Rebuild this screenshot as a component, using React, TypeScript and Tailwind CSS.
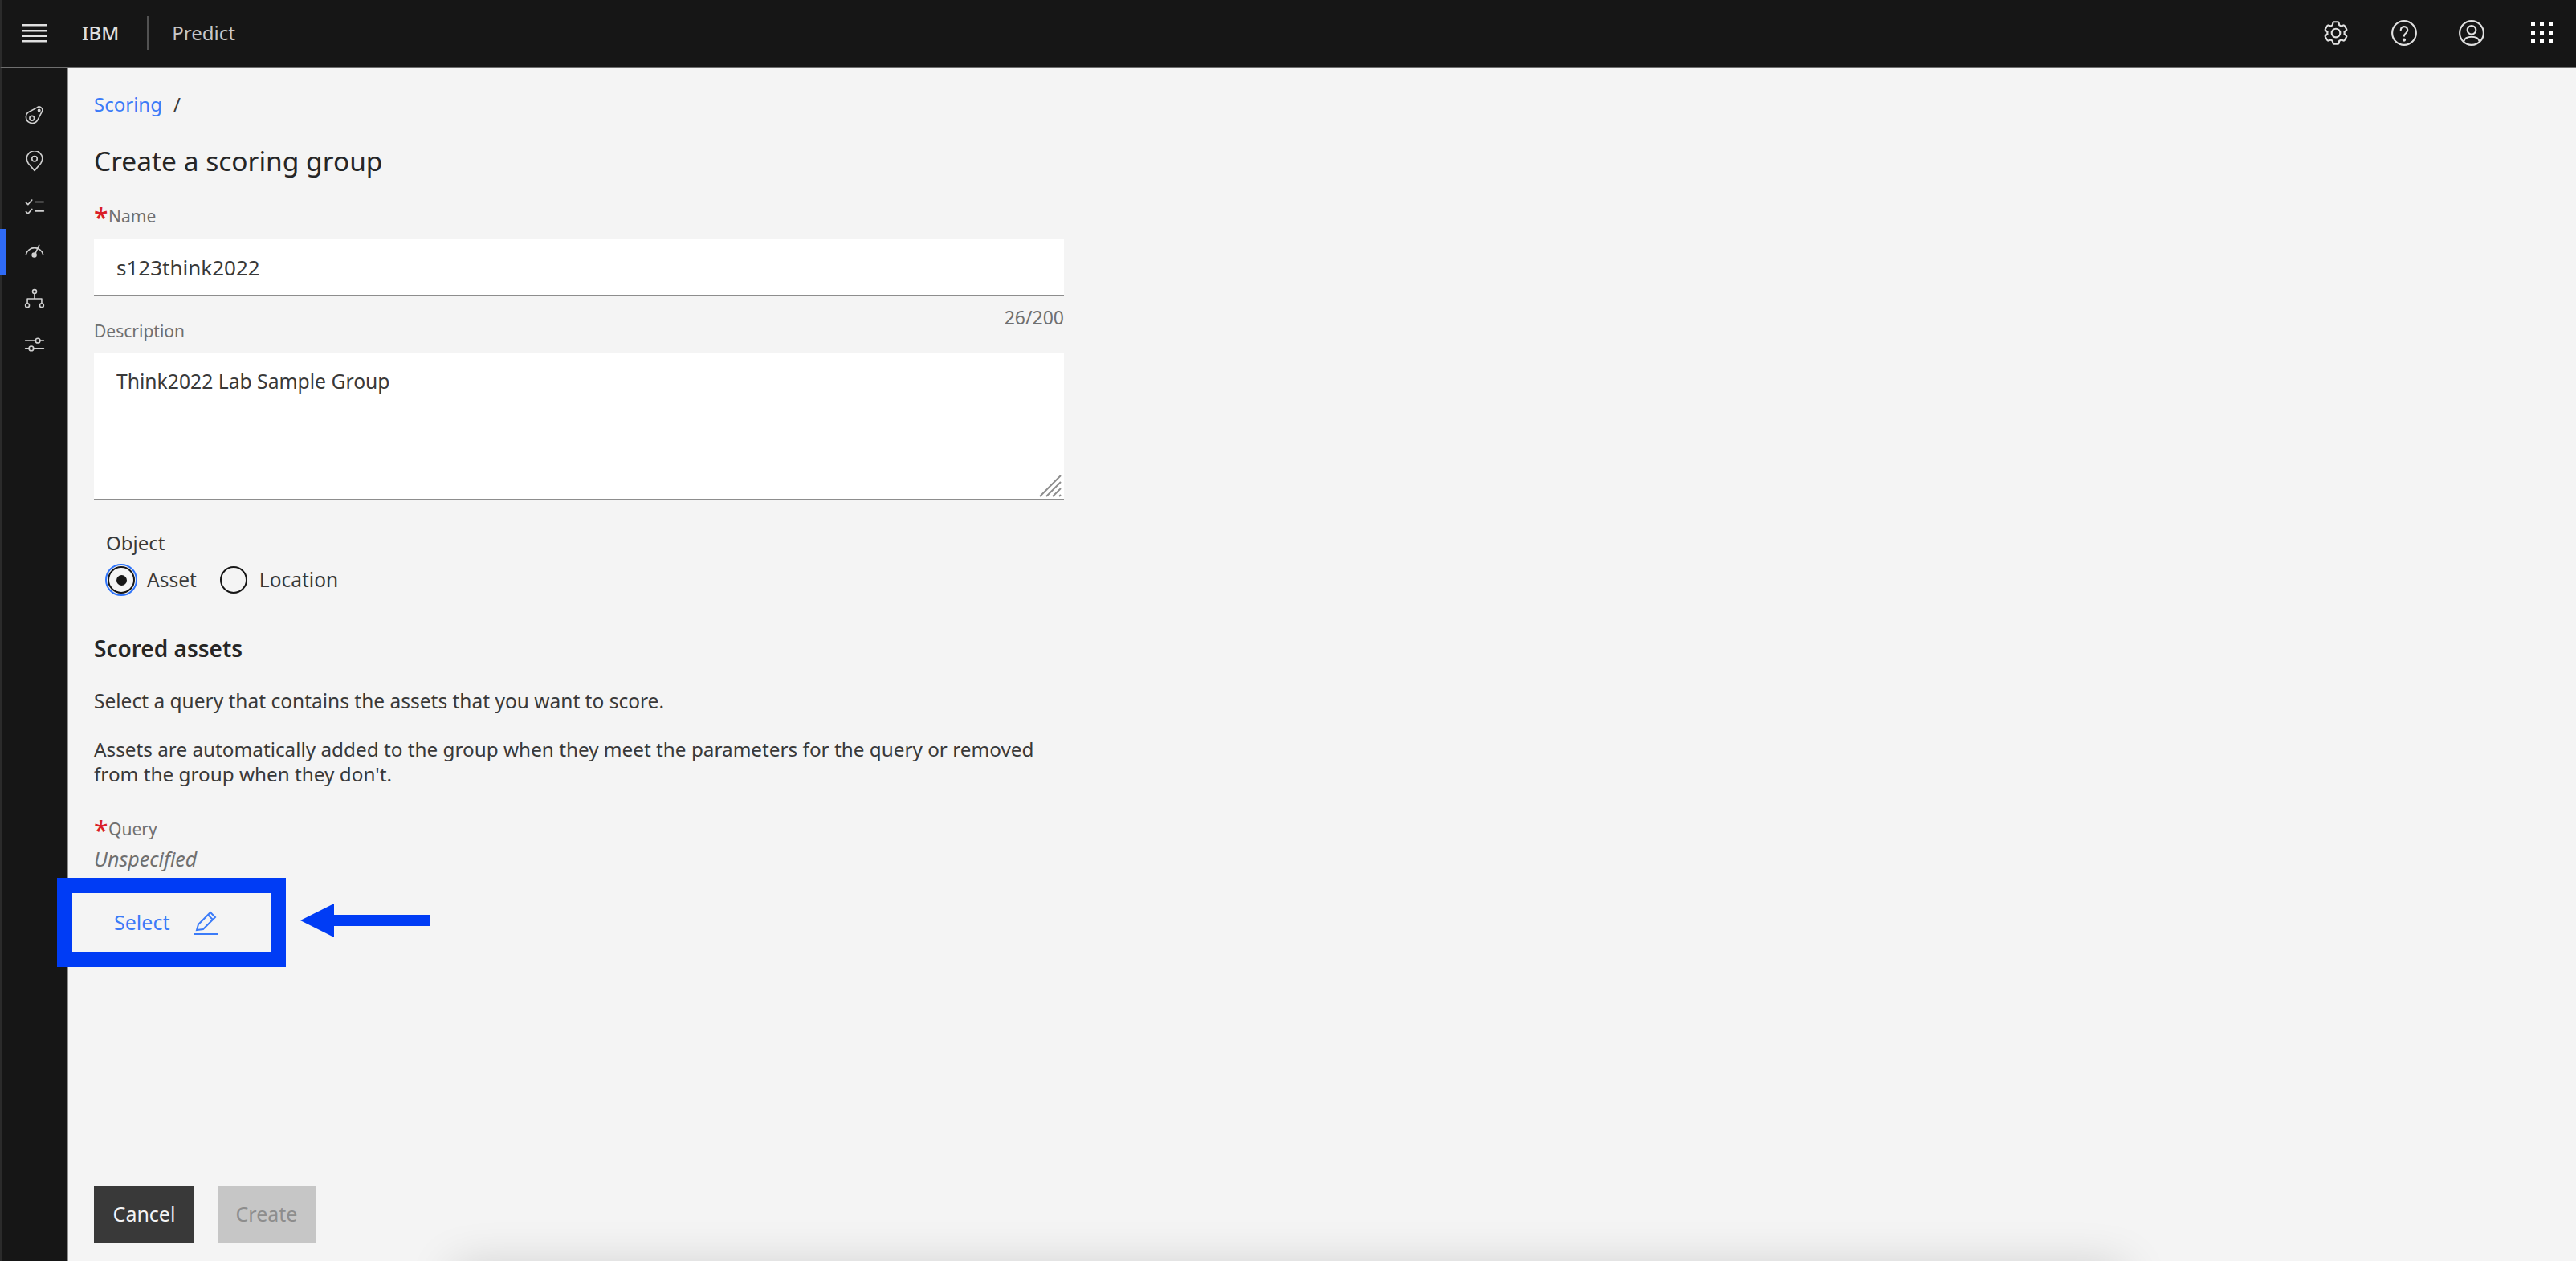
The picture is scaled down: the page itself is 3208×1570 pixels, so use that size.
import React from "react";

const font = { fontFamily: '"Noto Sans", sans-serif' };

const Icon = ({ size = 26, children }: { size?: number; children: React.ReactNode }) => (
  <svg
    width={size}
    height={size}
    viewBox="0 0 32 32"
    fill="none"
    stroke="currentColor"
    strokeWidth={2}
    strokeLinecap="round"
    strokeLinejoin="round"
  >
    {children}
  </svg>
);

const sideIcons = [
  <>
    <path d="M3 18 A9 9 0 0 1 6 11 L20 3.500 a5 5 0 0 1 7 7 L20 24 A9.500 9.500 0 0 1 3 18Z" />
    <circle cx="12" cy="20" r="3.500" />
    <circle cx="23" cy="8" r="1.500" fill="currentColor" />
  </>,
  <>
    <path d="M16 30 6.500 19 a12 12 0 1 1 19 0Z" />
    <circle cx="16" cy="12" r="4" />
  </>,
  <>
    <path d="M3 9 6 12 12 5M3 23 6 26 12 19M17 8H30M17 22H30" />
  </>,
  <>
    <path d="M3 18 A13.500 13.500 0 0 1 29 18" />
    <path d="M23 4 17 17" />
    <circle cx="15.500" cy="19" r="3" fill="currentColor" />
  </>,
  <>
    <circle cx="16" cy="5" r="3" />
    <circle cx="5" cy="26" r="3" />
    <circle cx="27" cy="26" r="3" />
    <path d="M16 8V16M5 23V16H27V23" />
  </>,
  <>
    <path d="M2 10H18M24 10H30M2 22H8M14 22H30" />
    <circle cx="21" cy="10" r="3.500" />
    <circle cx="11" cy="22" r="3.500" />
  </>,
];

const Required = ({ label }: { label: string }) => (
  <div className="flex h-[30px] items-center">
    <span className="h-[30px] w-[18px] text-[32px] leading-[32px] font-medium text-[#da1e28]">*</span>
    <span className="text-[21px] text-[#6f6f6f]">{label}</span>
  </div>
);

const Radio = ({ checked, label }: { checked?: boolean; label: string }) => (
  <label className="flex items-center gap-[15px]">
    <span
      className={
        checked
          ? "flex h-[34px] w-[34px] items-center justify-center rounded-full border-2 border-[#161616] outline-2 outline-offset-1 outline-[#2f74fa]"
          : "flex h-[34px] w-[34px] items-center justify-center rounded-full border-2 border-[#161616]"
      }
    >
      {checked && <span className="h-[13px] w-[13px] rounded-full bg-[#161616]" />}
    </span>
    <span className="text-[24.500px] text-[#393939]">{label}</span>
  </label>
);

export default function App() {
  return (
    <div className="relative flex h-[1570px] w-[3208px] flex-col overflow-hidden bg-[#f4f4f4]" style={font}>
      <header className="flex h-[85px] shrink-0 items-center border-b-2 border-l-[3px] border-b-[#6f6f6f] border-l-[#2b2b2b] bg-[#161616] pb-[2px] text-[#c6c6c6]">
        <svg className="ml-[24px]" width="31" height="24" viewBox="0 0 31 24" fill="#e0e0e0">
          <rect y="1" width="31" height="2.500" />
          <rect y="8" width="31" height="2.500" />
          <rect y="14.500" width="31" height="2.500" />
          <rect y="21" width="31" height="2.500" />
        </svg>
        <span className="ml-[44px] text-[24px] font-medium text-[#e0e0e0]">IBM</span>
        <span className="ml-[35px] h-[42px] w-[2px] bg-[#525252]" />
        <span className="ml-[29px] text-[24px]">Predict</span>
        <div className="ml-auto flex items-center pr-[29px] text-[#e0e0e0]">
          <svg width="34" height="34" viewBox="0 0 32 32" fill="currentColor">
            <path d="M27,16.760c0-.250,0-.500,0-.760s0-.510,0-.770l1.920-1.680A2,2,0,0,0,29.300,11L26.940,7a2,2,0,0,0-1.730-1,2,2,0,0,0-.640.100l-2.430.820a11.350,11.350,0,0,0-1.310-.750l-.510-2.520a2,2,0,0,0-2-1.610H13.640a2,2,0,0,0-2,1.610l-.510,2.520a11.480,11.480,0,0,0-1.320.750L7.430,6.060A2,2,0,0,0,6.790,6,2,2,0,0,0,5.060,7L2.700,11a2,2,0,0,0,.410,2.510L5,15.240c0,.250,0,.500,0,.760s0,.510,0,.770L3.110,18.450A2,2,0,0,0,2.700,21L5.060,25a2,2,0,0,0,1.730,1,2,2,0,0,0,.640-.100l2.430-.820a11.350,11.350,0,0,0,1.310.750l.510,2.520a2,2,0,0,0,2,1.610h4.720a2,2,0,0,0,2-1.610l.510-2.520a11.480,11.480,0,0,0,1.320-.750l2.420.820a2,2,0,0,0,.640.100,2,2,0,0,0,1.730-1L29.300,21a2,2,0,0,0-.41-2.510ZM25.210,24l-3.430-1.160a8.860,8.860,0,0,1-2.710,1.570L18.360,28H13.640l-.710-3.550a9.360,9.360,0,0,1-2.700-1.570L6.790,24,4.430,20l2.720-2.400a8.900,8.900,0,0,1,0-3.130L4.430,12,6.790,8l3.430,1.160a8.860,8.860,0,0,1,2.710-1.570L13.640,4h4.720l.710,3.550a9.360,9.360,0,0,1,2.700,1.570L25.210,8,27.570,12l-2.720,2.400a8.900,8.900,0,0,1,0,3.130L27.570,20Z" />
            <path d="M16,22a6,6,0,1,1,6-6A5.940,5.940,0,0,1,16,22Zm0-10a3.910,3.910,0,0,0-4,4,3.910,3.910,0,0,0,4,4,3.910,3.910,0,0,0,4-4A3.910,3.910,0,0,0,16,12Z" />
          </svg>
          <span className="ml-[51px]">
            <Icon size={34}>
              <circle cx="16" cy="16" r="14" />
              <path d="M12 12.500a4 4 0 1 1 6.500 3.200C17 17 16 17.500 16 19.500" />
              <circle cx="16" cy="24" r="1" fill="currentColor" />
            </Icon>
          </span>
          <span className="ml-[50px]">
            <Icon size={34}>
              <circle cx="16" cy="16" r="14" />
              <circle cx="16" cy="12.500" r="5" />
              <path d="M7 25.500C8 21.500 11 20.500 16 20.500s8 1 9 5" />
            </Icon>
          </span>
          <div className="ml-[57px] grid grid-cols-3 gap-[6px]">
            {Array.from({ length: 9 }).map((_, i) => (
              <span key={i} className="h-[5px] w-[5px] bg-white" />
            ))}
          </div>
        </div>
      </header>

      <div className="flex min-h-0 flex-1">
        <aside className="relative flex w-[85px] shrink-0 flex-col items-center border-r-2 border-l-[3px] border-r-[#8d8d8d] border-l-[#2b2b2b] bg-[#161616] pt-[30px] text-[#d0d0d0]">
          {sideIcons.map((ic, i) => (
            <div key={i} className="flex h-[57px] items-center justify-center">
              <Icon>{ic}</Icon>
            </div>
          ))}
          <span className="absolute top-[200px] -left-[3px] h-[58px] w-[7px] bg-[#2f6bf6]" />
        </aside>

        <main className="relative flex min-w-0 flex-1 flex-col pt-[30px] pb-[22px] pl-[32px]">
          <nav className="flex h-[30px] items-center gap-[14px] text-[24px]">
            <a className="text-[#3b7bf8]">Scoring</a>
            <span className="text-[#393939]">/</span>
          </nav>
          <h1 className="mt-[30px] h-[50px] text-[33.500px] leading-[50px] text-[#262626]">Create a scoring group</h1>

          <div className="mt-[30px] w-[1208px]">
            <Required label="Name" />
            <input
              readOnly
              defaultValue="s123think2022"
              className="mt-[13px] h-[71px] w-full border-b-2 border-[#8d8d8d] bg-white pl-[28px] text-[26px] text-[#393939] outline-none"
            />
            <div className="mt-[11px] flex h-[44px] justify-between">
              <span className="self-end text-[21px] leading-[24px] text-[#6f6f6f]">Description</span>
              <span className="self-start text-[23px] leading-[30px] text-[#6f6f6f]">26/200</span>
            </div>
            <div className="relative mt-[15px]">
              <textarea
                readOnly
                defaultValue="Think2022 Lab Sample Group"
                className="block h-[184px] w-full resize-none border-b-2 border-[#8d8d8d] bg-white pt-[18px] pl-[28px] text-[24.700px] leading-[36px] text-[#393939] outline-none"
              />
              <svg className="absolute right-[3px] bottom-[4px]" width="28" height="28" viewBox="0 0 28 28" stroke="#8d8d8d" strokeWidth="2">
                <path d="M1 27 27 1M9 27 27 9M17 27 27 17M25 27 27 25" />
              </svg>
            </div>
          </div>

          <div className="mt-[38px] ml-[15px] h-[30px] text-[24px] leading-[30px] text-[#393939]">Object</div>
          <div className="mt-[9px] ml-[17px] flex h-[44px] items-center gap-[29px]">
            <Radio checked label="Asset" />
            <Radio label="Location" />
          </div>

          <h2 className="mt-[45px] h-[36px] text-[28px] leading-[36px] font-semibold text-[#262626]">Scored assets</h2>
          <p className="mt-[32px] text-[24.500px] leading-[31px] text-[#393939]">
            Select a query that contains the assets that you want to score.
          </p>
          <p className="mt-[29px] w-[1208px] text-[24.300px] leading-[31px] text-[#393939]">
            Assets are automatically added to the group when they meet the parameters for the query or removed from the group when they don't.
          </p>

          <div className="mt-[39px]">
            <Required label="Query" />
          </div>
          <div className="mt-[6px] h-[30px] text-[25px] leading-[30px] text-[#6f6f6f] italic">Unspecified</div>

          <div className="relative mt-[28px] -ml-[27px] h-[73px] w-[247px]">
            <button className="flex h-full w-full items-center pl-[52px] text-[25px] text-[#3b7bf8]">
              Select
              <svg className="ml-[30px]" width="32" height="32" viewBox="0 0 32 32" fill="none" stroke="currentColor" strokeWidth="2">
                <path d="M1 30H31" />
                <path d="M4 25 6 18 21 3 27 9 12 24Z" />
                <path d="M18 6 24 12" />
              </svg>
            </button>
            <div className="absolute -inset-[19px] border-[19px] border-[#003cf5]" />
            <svg className="absolute top-[13px] left-[284px]" width="162" height="42" viewBox="0 0 162 42" fill="#003cf5">
              <path d="M0 21 42 0V14H162V28H42V42Z" />
            </svg>
          </div>

          <div className="mt-auto flex gap-[29px] text-[25px]">
            <button className="h-[72px] w-[125px] bg-[#393939] text-[#f4f4f4]">Cancel</button>
            <button className="h-[72px] w-[122px] bg-[#c6c6c6] text-[#8d8d8d]">Create</button>
          </div>

          <div className="absolute -bottom-[50px] left-[480px] h-[40px] w-[2080px] shadow-[0_0_60px_rgba(0,0,0,0.2)]" />
        </main>
      </div>
    </div>
  );
}
